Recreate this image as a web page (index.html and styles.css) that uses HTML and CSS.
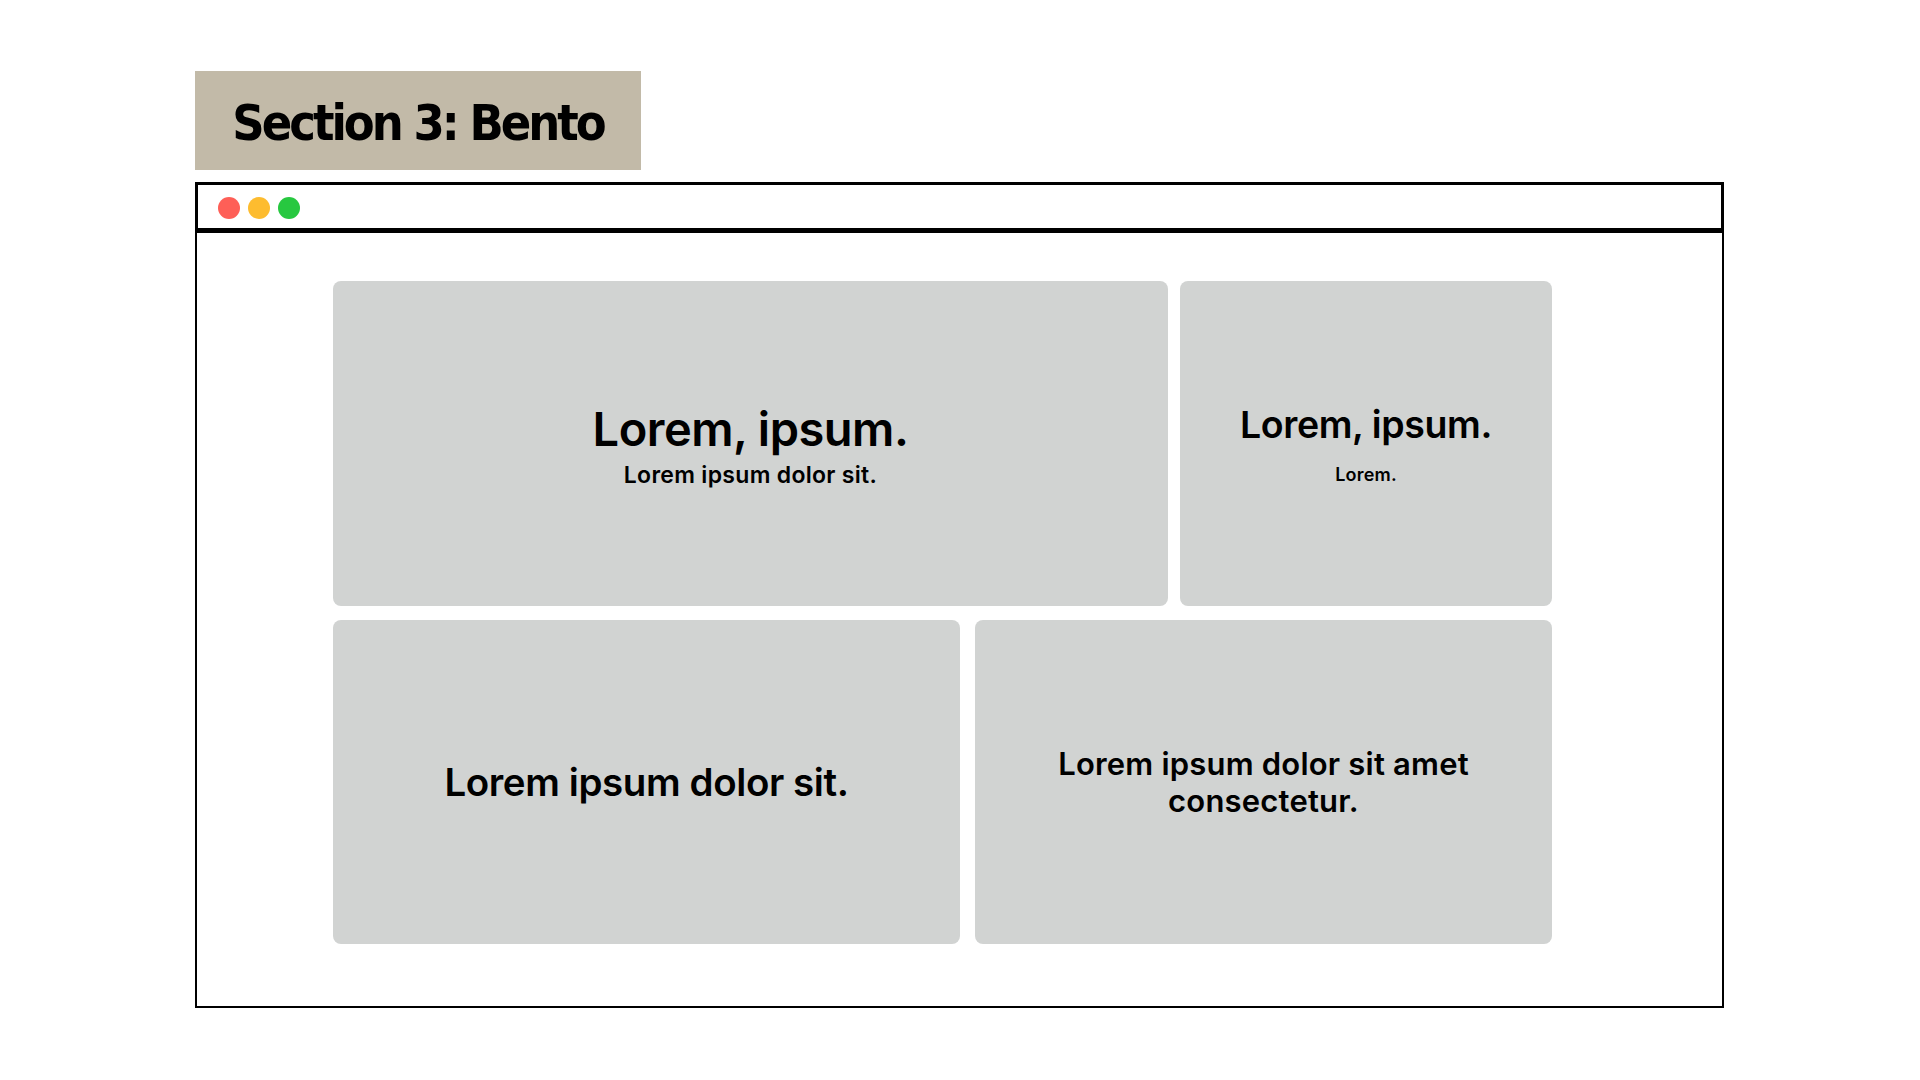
FILE: index.html
```html
<!DOCTYPE html>
<html lang="en">
<head>
<meta charset="utf-8">
<title>Section 3: Bento</title>
<link rel="stylesheet" href="styles.css">
</head>
<body>
<main class="page">
  <div class="section-tag"><h1 class="section-title">Section 3: Bento</h1></div>
  <div class="window">
    <div class="titlebar">
      <span class="dot dot-red"></span>
      <span class="dot dot-yellow"></span>
      <span class="dot dot-green"></span>
    </div>
    <div class="window-body">
      <div class="bento">
        <div class="row">
          <div class="card card-a">
            <h2 class="title-xl">Lorem, ipsum.</h2>
            <p class="sub-md">Lorem ipsum dolor sit.</p>
          </div>
          <div class="card card-b">
            <h2 class="title-lg">Lorem, ipsum.</h2>
            <p class="sub-sm">Lorem.</p>
          </div>
        </div>
        <div class="row row-2">
          <div class="card card-c">
            <h2 class="title-md">Lorem ipsum dolor sit.</h2>
          </div>
          <div class="card card-d">
            <h2 class="title-sm">Lorem ipsum dolor sit amet consectetur.</h2>
          </div>
        </div>
      </div>
    </div>
  </div>
</main>
</body>
</html>
```

FILE: styles.css
```css
* { box-sizing: border-box; }
html, body { margin: 0; padding: 0; background: #ffffff; }
body { font-family: Inter, "Liberation Sans", sans-serif; color: #000; }

.page {
  padding: 71px 0 0 195px;
  width: 1920px;
  height: 1080px;
}

.section-tag {
  width: 446px;
  height: 99px;
  background: #c2baa8;
  display: flex;
  align-items: center;
  justify-content: center;
  margin-bottom: 12px;
}
.section-title {
  margin: 0;
  font-family: "DejaVu Sans Condensed", "DejaVu Sans", sans-serif;
  font-stretch: condensed;
  font-weight: 800;
  font-size: 50px;
  letter-spacing: -3px;
  line-height: 1;
  padding-top: 4px;
}

.window { width: 1529px; }
.titlebar {
  height: 51px;
  border: 3px solid #000;
  border-bottom-width: 5px;
  display: flex;
  align-items: center;
  gap: 8px;
  padding-left: 20px;
  padding-top: 2px;
}
.dot { width: 22px; height: 22px; border-radius: 50%; display: block; }
.dot-red { background: #fe5f57; }
.dot-yellow { background: #fdbc2f; }
.dot-green { background: #27c840; }

.window-body {
  height: 775px;
  border: 2px solid #000;
  border-top: none;
  padding: 48px 0 0 136px;
}

.bento { width: 1219px; display: flex; flex-direction: column; gap: 14px; }
.row { display: flex; gap: 12px; height: 325px; }
.row-2 { gap: 15px; height: 324px; }

.card {
  background: #d1d3d2;
  border-radius: 8px;
  display: flex;
  flex-direction: column;
  align-items: center;
  justify-content: center;
  text-align: center;
}
.card-a { width: 835px; padding-top: 5px; }
.card-b { width: 372px; }
.card-c { width: 627px; }
.card-d { width: 577px; }

.card h2, .card p { margin: 0; font-weight: 600; }

.title-xl { font-size: 47px; line-height: 1.1; letter-spacing: -0.5px; }
.sub-md { font-size: 23px; line-height: 1.2; letter-spacing: 0.3px; margin-top: 7px !important; }
.title-lg { font-size: 37.5px; line-height: 1.2; letter-spacing: -0.4px; margin-bottom: 17px !important; }
.sub-sm { font-size: 18px; line-height: 1.2; letter-spacing: 0.2px; }
.title-md { font-size: 38.5px; line-height: 1.2; letter-spacing: -0.4px; }
.title-sm { font-size: 31px; line-height: 37px; letter-spacing: 0.2px; padding: 0 40px; }
```
